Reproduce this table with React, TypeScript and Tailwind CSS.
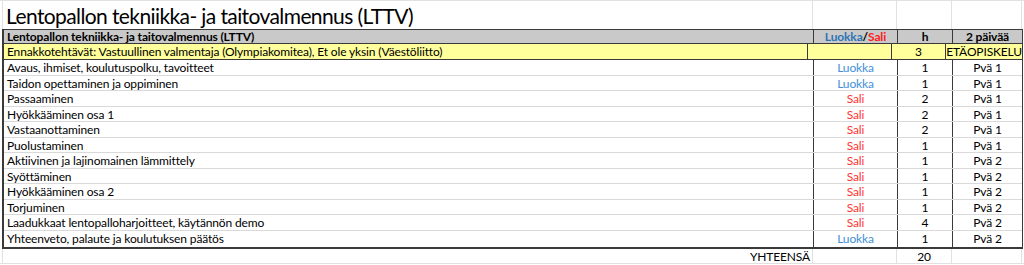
import React from 'react'

type Row = { name: string; place: 'Luokka' | 'Sali'; h: number; day: string }

const rows: Row[] = [
  { name: 'Avaus, ihmiset, koulutuspolku, tavoitteet', place: 'Luokka', h: 1, day: 'Pvä 1' },
  { name: 'Taidon opettaminen ja oppiminen', place: 'Luokka', h: 1, day: 'Pvä 1' },
  { name: 'Passaaminen', place: 'Sali', h: 2, day: 'Pvä 1' },
  { name: 'Hyökkääminen osa 1', place: 'Sali', h: 2, day: 'Pvä 1' },
  { name: 'Vastaanottaminen', place: 'Sali', h: 2, day: 'Pvä 1' },
  { name: 'Puolustaminen', place: 'Sali', h: 1, day: 'Pvä 1' },
  { name: 'Aktiivinen ja lajinomainen lämmittely', place: 'Sali', h: 1, day: 'Pvä 2' },
  { name: 'Syöttäminen', place: 'Sali', h: 1, day: 'Pvä 2' },
  { name: 'Hyökkääminen osa 2', place: 'Sali', h: 1, day: 'Pvä 2' },
  { name: 'Torjuminen', place: 'Sali', h: 1, day: 'Pvä 2' },
  { name: 'Laadukkaat lentopalloharjoitteet, käytännön demo', place: 'Sali', h: 4, day: 'Pvä 2' },
  { name: 'Yhteenveto, palaute ja koulutuksen päätös', place: 'Luokka', h: 1, day: 'Pvä 2' },
]

const font = { fontFamily: 'Lato, "Open Sans", sans-serif' }

const App = () => {
  return (
    <div className="w-[1024px] h-[265px] bg-white overflow-hidden text-black" style={font}>
      {/* title row */}
      <div className="flex h-[29px] border-t border-[#e1e1e1]">
        <div className="w-[3px] border-r border-[#e1e1e1]" />
        <div className="w-[810px] border-r border-[#e1e1e1] pl-[3px] pt-[3px] text-[21px] leading-[24px] tracking-[-0.6px] whitespace-nowrap">
          Lentopallon tekniikka- ja taitovalmennus (LTTV)
        </div>
        <div className="w-[84px] border-r border-[#e1e1e1]" />
        <div className="w-[55px] border-r border-[#e1e1e1]" />
        <div className="w-[70px] border-r border-[#e1e1e1]" />
      </div>

      {/* table */}
      <div className="ml-[2px] w-[1021px] border-l-2 border-r border-b-2 border-[#3a3a3a] text-[12px] tracking-[-0.14px]">
        <div className="flex h-[15px] bg-[#c9c9c9] border-t border-b border-[#3a3a3a] font-bold leading-[13px]">
          <div className="w-[810px] pl-[3px] border-r border-[#3a3a3a]">Lentopallon tekniikka- ja taitovalmennus (LTTV)</div>
          <div className="w-[84px] text-center border-r border-[#3a3a3a]">
            <span className="text-[#2e75b6]">Luokka</span>/<span className="text-[#ff2020]">Sali</span>
          </div>
          <div className="w-[55px] text-center border-r border-[#3a3a3a]">h</div>
          <div className="flex-1 text-center">2 päivää</div>
        </div>
        <div className="flex h-[16px] bg-[#ffff9c] border-b border-[#3a3a3a] leading-[15px]">
          <div className="w-[810px] pl-[3px] border-r border-[#3a3a3a] whitespace-nowrap">
            Ennakkotehtävät: Vastuullinen valmentaja (Olympiakomitea), Et ole yksin (Väestöliitto)
          </div>
          <div className="w-[84px] border-r border-[#3a3a3a]" />
          <div className="w-[55px] text-center border-r border-[#3a3a3a]">3</div>
          <div className="flex-1 text-center">ETÄOPISKELU</div>
        </div>
        {rows.map((r, i) => (
          <div
            key={r.name}
            className={`flex leading-[15px] ${i % 2 === 1 && i < 10 ? 'h-[15px]' : 'h-[16px]'} ${i < rows.length - 1 ? 'border-b border-[#d9d9d9]' : ''}`}
          >
            <div className="w-[810px] pl-[3px] border-r border-[#3a3a3a] whitespace-nowrap">{r.name}</div>
            <div className={`w-[84px] text-center border-r border-[#3a3a3a] ${r.place === 'Luokka' ? 'text-[#3f8fd8]' : 'text-[#ff3535]'}`}>
              {r.place}
            </div>
            <div className="w-[55px] text-center border-r border-[#3a3a3a]">{r.h}</div>
            <div className="flex-1 text-center">{r.day}</div>
          </div>
        ))}
      </div>

      {/* total row */}
      <div className="flex h-[15px] border-b border-[#e1e1e1] text-[12px] leading-[15px] tracking-[-0.14px]">
        <div className="w-[3px] border-r border-[#e1e1e1]" />
        <div className="w-[810px] pr-[2px] text-right border-r border-[#e1e1e1]">YHTEENSÄ</div>
        <div className="w-[84px] border-r border-[#e1e1e1]" />
        <div className="w-[55px] text-center border-r border-[#e1e1e1]">20</div>
        <div className="w-[70px] border-r border-[#e1e1e1]" />
      </div>
    </div>
  )
}

export default App
